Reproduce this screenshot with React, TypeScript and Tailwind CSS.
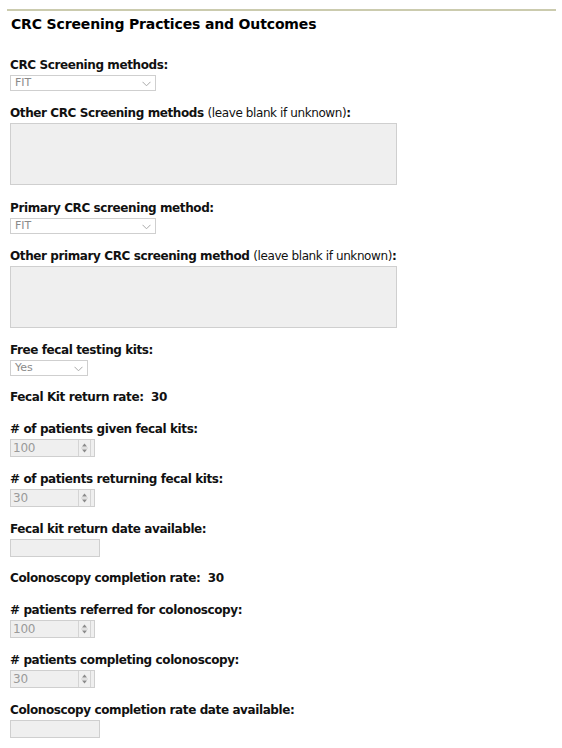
import React from "react";

const font = { fontFamily: '"DejaVu Sans", Verdana, sans-serif' };

function Chevron() {
  return (
    <svg width="9" height="6" viewBox="0 0 9 6" className="absolute right-[4px] top-[5px]">
      <path d="M0.5 0.8 L4.5 4.8 L8.5 0.8" fill="none" stroke="#a9a9a9" strokeWidth="1" />
    </svg>
  );
}

function Select({ value, w }: { value: string; w: string }) {
  return (
    <div className={`relative h-[16px] ${w} border border-[#cfcfcf] bg-white text-[11px] leading-[14px] text-[#8a8a8a] pl-[4px]`}>
      {value}
      <Chevron />
    </div>
  );
}

function NumberInput({ value }: { value: string }) {
  return (
    <div className="relative h-[18px] w-[85px] border border-[#cfcfcf] bg-[#efefef] text-[12px] leading-[16px] text-[#9a9a9a] pl-[2px] tracking-[-0.2px]">
      {value}
      <div className="absolute right-[3px] top-[0px] h-[16px] w-[13px] border-x border-[#d4d4d4] bg-[#f0f0f0] flex items-center justify-center">
        <svg width="7" height="12" viewBox="0 0 7 12">
          <path d="M1 4.5 L3.5 1.5 L6 4.5 Z" fill="#8a8a8a" />
          <line x1="0" y1="6" x2="7" y2="6" stroke="#d0d0d0" strokeWidth="1" />
          <path d="M1 7.5 L3.5 10.5 L6 7.5 Z" fill="#8a8a8a" />
        </svg>
      </div>
    </div>
  );
}

function DateInput() {
  return <div className="h-[18px] w-[90px] border border-[#cfcfcf] bg-[#efefef]" />;
}

function TextArea() {
  return <div className="h-[62px] w-[387px] border border-[#cfcfcf] bg-[#efefef]" />;
}

function Label({ children }: { children: React.ReactNode }) {
  return (
    <div className="text-[12px] leading-[15px] font-bold text-[#111] mb-[2px] tracking-[-0.4px]">{children}</div>
  );
}

function Stat({ children }: { children: React.ReactNode }) {
  return <div className="text-[12px] leading-[15px] font-bold text-[#111] tracking-[-0.4px]">{children}</div>;
}

export default function App() {
  return (
    <div className="w-[562px] h-[748px] bg-white overflow-hidden" style={font}>
      <div className="pt-[9px] px-[7px]">
        <div className="h-[2px] w-[549px] bg-[#cbcbae]" />
      </div>
      <div className="px-[10px]">
        <div className="mt-[4px] pl-[1px] text-[14px] leading-[18px] font-bold text-black tracking-[-0.15px]">
          CRC Screening Practices and Outcomes
        </div>

        <div className="mt-[25px]">
          <Label>CRC Screening methods:</Label>
          <Select value="FIT" w="w-[146px]" />
        </div>

        <div className="mt-[15px]">
          <Label>
            Other CRC Screening methods <span className="font-normal">(leave blank if unknown)</span>:
          </Label>
          <TextArea />
        </div>

        <div className="mt-[16px]">
          <Label>Primary CRC screening method:</Label>
          <Select value="FIT" w="w-[146px]" />
        </div>

        <div className="mt-[15px]">
          <Label>
            Other primary CRC screening method <span className="font-normal">(leave blank if unknown)</span>:
          </Label>
          <TextArea />
        </div>

        <div className="mt-[15px]">
          <Label>Free fecal testing kits:</Label>
          <Select value="Yes" w="w-[78px]" />
        </div>

        <div className="mt-[14px]">
          <Stat>Fecal Kit return rate:&nbsp; 30</Stat>
        </div>

        <div className="mt-[17px]">
          <Label># of patients given fecal kits:</Label>
          <NumberInput value="100" />
        </div>

        <div className="mt-[15px]">
          <Label># of patients returning fecal kits:</Label>
          <NumberInput value="30" />
        </div>

        <div className="mt-[15px]">
          <Label>Fecal kit return date available:</Label>
          <DateInput />
        </div>

        <div className="mt-[14px]">
          <Stat>Colonoscopy completion rate:&nbsp; 30</Stat>
        </div>

        <div className="mt-[17px]">
          <Label># patients referred for colonoscopy:</Label>
          <NumberInput value="100" />
        </div>

        <div className="mt-[15px]">
          <Label># patients completing colonoscopy:</Label>
          <NumberInput value="30" />
        </div>

        <div className="mt-[15px]">
          <Label>Colonoscopy completion rate date available:</Label>
          <DateInput />
        </div>
      </div>
    </div>
  );
}
